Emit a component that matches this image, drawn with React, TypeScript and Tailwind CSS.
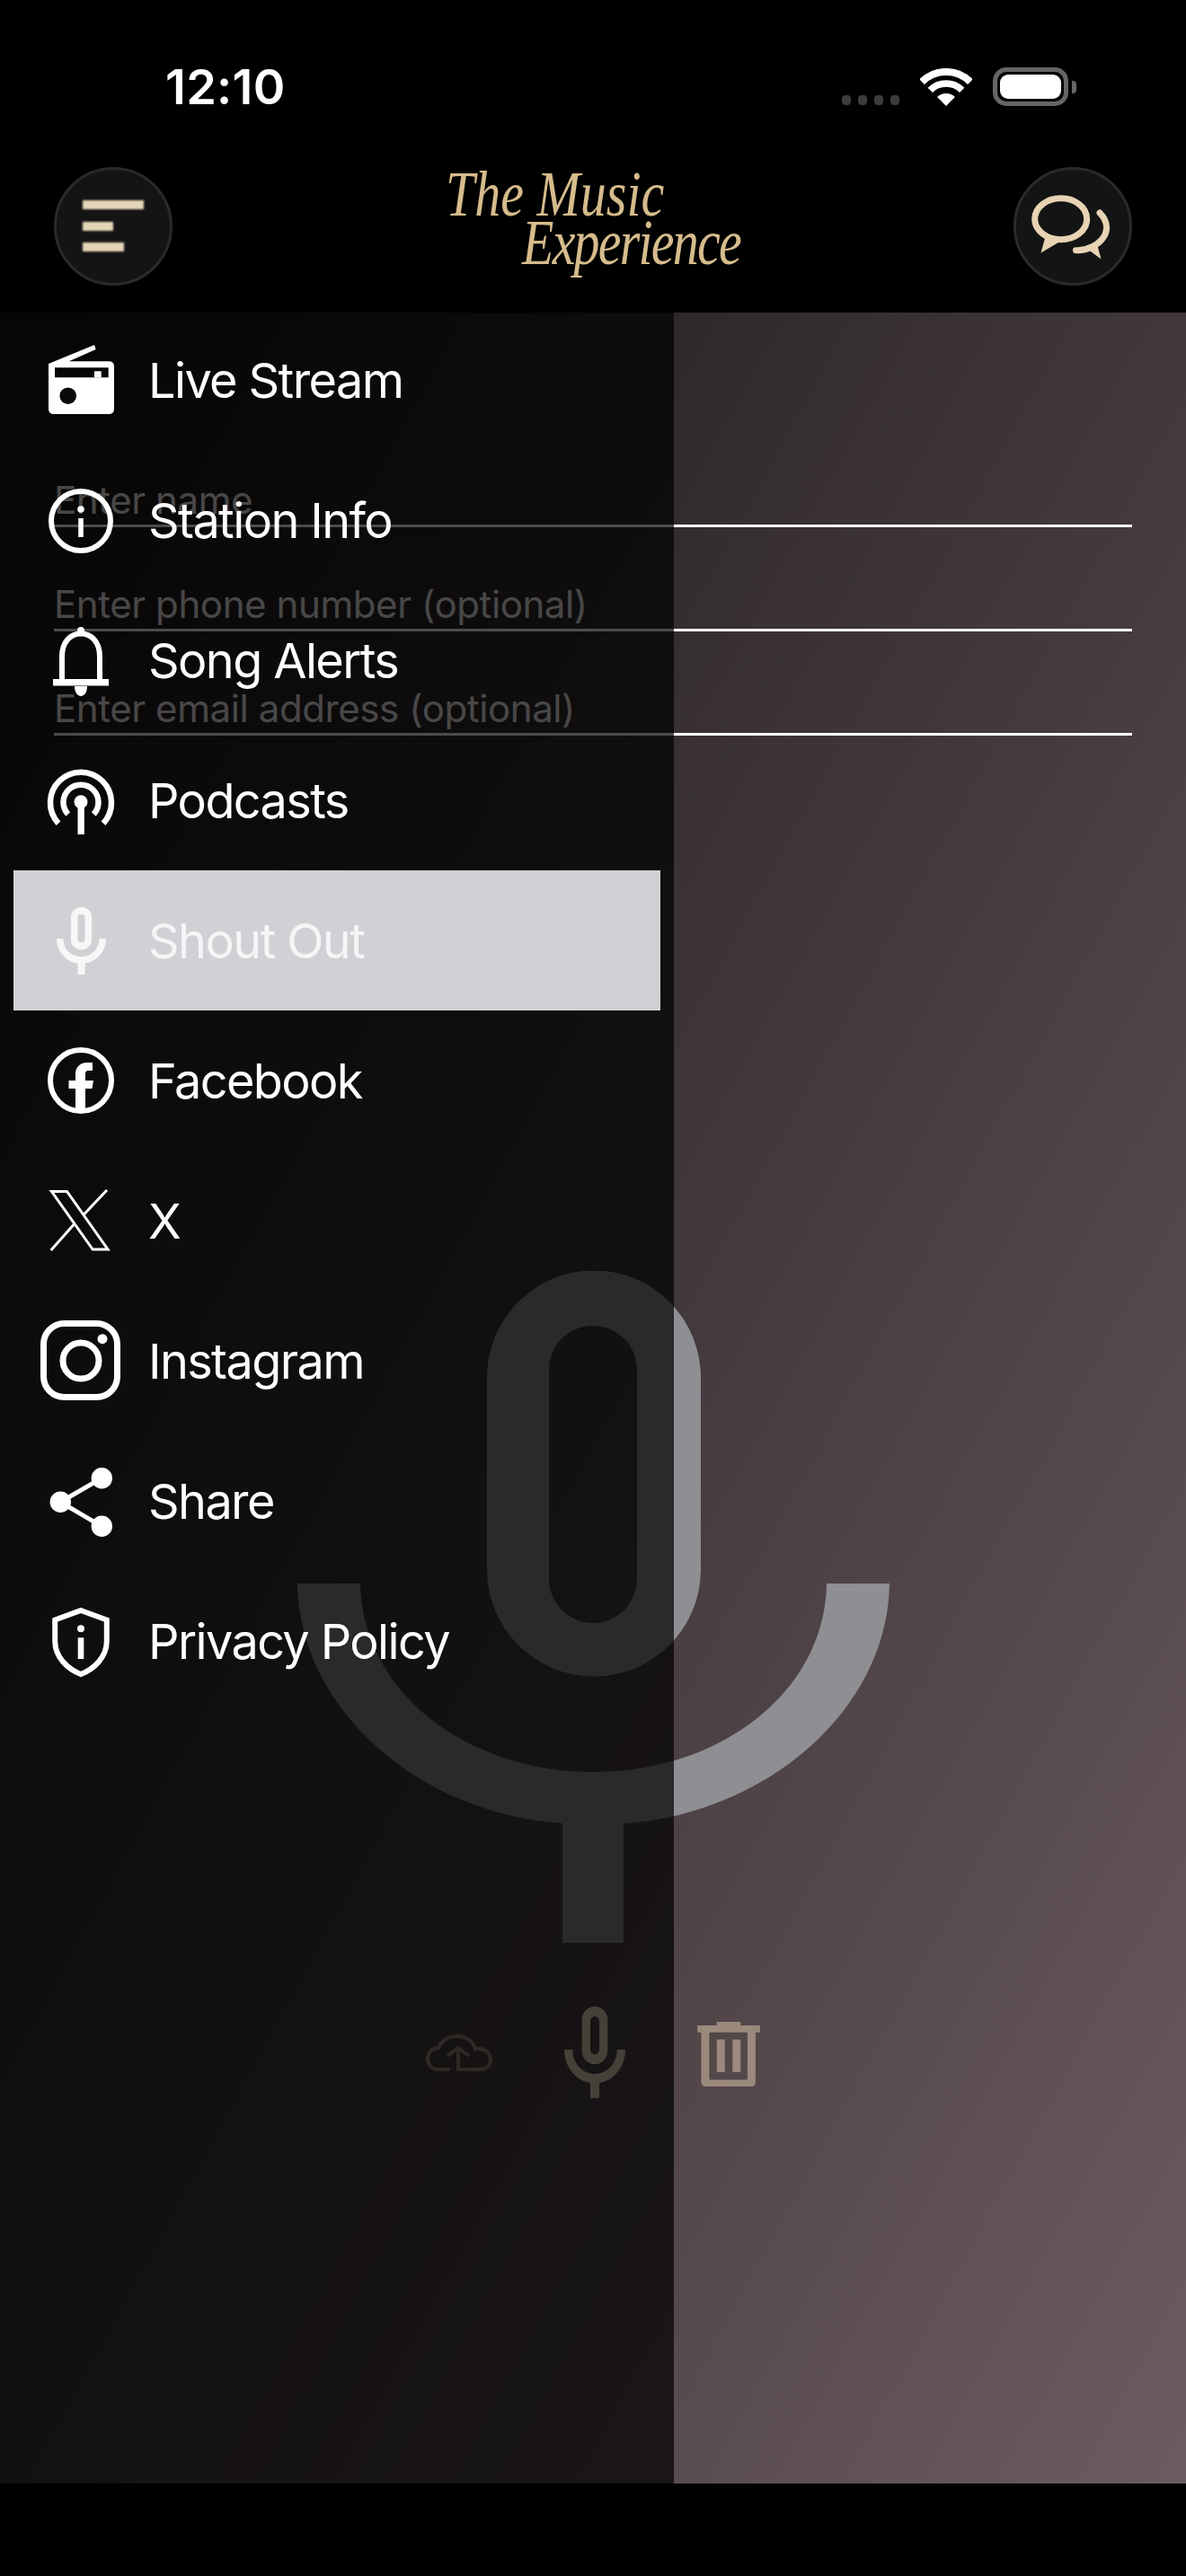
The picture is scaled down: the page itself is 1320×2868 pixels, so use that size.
import React from "react";

const FONT = "font-['Inter','Liberation_Sans',sans-serif]";

function Svg({ children }: { children: React.ReactNode }) {
  return (
    <svg viewBox="0 0 100 100" className="w-[100px] h-[100px] shrink-0" fill="none">
      {children}
    </svg>
  );
}

const icons: Record<string, React.ReactNode> = {
  radio: (
    <Svg>
      <path
        fillRule="evenodd"
        fill="#fff"
        d="M14 32 L65 11 L66.7 16 L36.7 29.3 H81 Q87 29.3 87 35 V82 Q87 88 81 88 H20 Q14 88 14 82 Z M21 36.3 V47.3 H80.7 V36.3 Z"
      />
      <rect x="65" y="40.3" width="7.7" height="7" fill="#fff" />
      <circle cx="35.7" cy="67.7" r="9.3" fill="#0a0a0a" />
    </Svg>
  ),
  info: (
    <Svg>
      <circle cx="50" cy="51" r="33" stroke="#fff" strokeWidth="6" />
      <circle cx="50" cy="38" r="3.8" fill="#fff" />
      <rect x="47.2" y="48" width="5.6" height="21" fill="#fff" />
    </Svg>
  ),
  bell: (
    <Svg>
      <rect x="46" y="13" width="8" height="10" rx="4" fill="#fff" />
      <path d="M29 72 V46 C29 30 38 20.5 50 20.5 C62 20.5 71 30 71 46 V72" stroke="#fff" strokeWidth="6" />
      <rect x="19" y="71" width="62" height="7.5" fill="#fff" />
      <path d="M43 79 H57 C57 88 52 90 50 90 C48 90 43 88 43 79 Z" fill="#fff" />
    </Svg>
  ),
  podcast: (
    <Svg>
      <path d="M25 75.7 A34 34 0 1 1 75 75.7" stroke="#fff" strokeWidth="6.5" />
      <path d="M35.7 65.5 A19.5 19.5 0 1 1 64.3 65.5" stroke="#fff" strokeWidth="6.5" />
      <circle cx="50" cy="51.7" r="7.5" fill="#fff" />
      <rect x="46.5" y="52" width="7.3" height="36" fill="#fff" />
    </Svg>
  ),
  facebook: (
    <Svg>
      <circle cx="50" cy="50" r="34" stroke="#fff" strokeWidth="6" />
      <path
        fill="#fff"
        d="M44 85 V59 H36.5 V50 H44 V43 C44 34 50 30 57 30 H63 V39 H58 C56 39 55 40 55 43 V50 H64 L62.5 59 H55 V85 Z"
      />
    </Svg>
  ),
  x: (
    <Svg>
      <path d="M17.5 17.5 H34.5 L80 82 H63.2 Z" stroke="#fff" strokeWidth="3" />
      <path d="M79 16 L53 43.5 M16.7 83 L43.3 53" stroke="#fff" strokeWidth="3" />
    </Svg>
  ),
  instagram: (
    <Svg>
      <rect x="8.5" y="8.5" width="82" height="82" rx="23" stroke="#fff" strokeWidth="7" />
      <circle cx="50" cy="50" r="20" stroke="#fff" strokeWidth="7" />
      <circle cx="74" cy="25.7" r="5.5" fill="#fff" />
    </Svg>
  ),
  share: (
    <Svg>
      <path d="M73.3 24.7 L27.3 51.3 L73.3 78.3" stroke="#fff" strokeWidth="5" />
      <circle cx="73.3" cy="24.7" r="11.7" fill="#fff" />
      <circle cx="27.3" cy="51.3" r="11.7" fill="#fff" />
      <circle cx="73.3" cy="78.3" r="11.7" fill="#fff" />
    </Svg>
  ),
  shield: (
    <Svg>
      <path
        d="M50 16 L78.8 26.5 V50 C78.8 68 65 81 50 87 C35 81 21.2 68 21.2 50 V26.5 Z"
        stroke="#fff"
        strokeWidth="6"
      />
      <circle cx="50" cy="36.3" r="4" fill="#fff" />
      <rect x="46.7" y="46.3" width="6.6" height="23.7" fill="#fff" />
    </Svg>
  ),
};

function SmallMic({ color, className }: { color: string; className: string }) {
  return (
    <svg viewBox="0 0 68 102" className={className} preserveAspectRatio="none">
      <path
        fill={color}
        fillRule="evenodd"
        d="M19.7 14.3 A14.3 14.3 0 0 1 48.3 14.3 V50 A14.3 14.3 0 0 1 19.7 50 Z M29 16 A5 5 0 0 1 39 16 V48.3 A5 5 0 0 1 29 48.3 Z"
      />
      <path
        fill={color}
        d="M0 48 H9.3 C9.3 63 20 75 34 75 C48 75 58.7 63 58.7 48 H68 C68 68 54 83 39 85 V102 H29 V85 C14 83 0 68 0 48 Z"
      />
    </svg>
  );
}

const rows: { label: string; icon: string; active?: boolean }[] = [
  { label: "Live Stream", icon: "radio" },
  { label: "Station Info", icon: "info" },
  { label: "Song Alerts", icon: "bell" },
  { label: "Podcasts", icon: "podcast" },
  { label: "Shout Out", icon: "mic", active: true },
  { label: "Facebook", icon: "facebook" },
  { label: "X", icon: "x" },
  { label: "Instagram", icon: "instagram" },
  { label: "Share", icon: "share" },
  { label: "Privacy Policy", icon: "shield" },
];

function Field({ text }: { text: string }) {
  return (
    <div className="h-[116px] border-b-[3px] border-white flex items-end pb-[2px]">
      <span className="text-[42px] leading-[50px] text-[#f2eeee] tracking-[-0.4px]">{text}</span>
    </div>
  );
}

export default function App() {
  return (
    <div className={`w-[1320px] h-[2868px] bg-black flex flex-col overflow-hidden ${FONT}`}>
      <div className="h-[186px] relative shrink-0">
        <div className="flex items-start justify-between pt-[64px] pl-[184px] pr-[122px]">
          <span className="text-[54px] leading-[65px] font-semibold text-white tracking-[0.3px]">12:10</span>
          <div className="flex items-end gap-[23px] pt-[11px]">
            <div className="flex gap-[8px] pb-[1px]">
              <div className="w-[10px] h-[11px] rounded-[4px] bg-[#3c3c3c]" />
              <div className="w-[10px] h-[11px] rounded-[4px] bg-[#3c3c3c]" />
              <div className="w-[10px] h-[11px] rounded-[4px] bg-[#3c3c3c]" />
              <div className="w-[10px] h-[11px] rounded-[4px] bg-[#3c3c3c]" />
            </div>
            <svg viewBox="0 0 58 42" className="w-[58px] h-[42px]" fill="none">
              <path d="M2.1 15.1 A38 38 0 0 1 55.9 15.1" stroke="#fff" strokeWidth="8" />
              <path d="M11.3 24.3 A25 25 0 0 1 46.7 24.3" stroke="#fff" strokeWidth="7.5" />
              <path d="M29 42 L19.1 32.1 A14 14 0 0 1 38.9 32.1 Z" fill="#fff" />
            </svg>
            <div className="flex items-center gap-[4px]">
              <div className="w-[84px] h-[43px] rounded-[15px] border-[5px] border-[#666] p-[3px] bg-black">
                <div className="w-full h-full rounded-[9px] bg-white" />
              </div>
              <div className="w-[5px] h-[14px] rounded-r-[4px] bg-[#666]" />
            </div>
          </div>
        </div>
      </div>

      <div className="h-[162px] shrink-0 flex justify-between px-[60px]">
        <div className="w-[132px] h-[132px] rounded-full bg-[#141414] border-[3px] border-[#2a2a2a] flex flex-col gap-[13.5px] pt-[34px] pl-[29px]">
          <div className="w-[68px] h-[10px] bg-[#e6d6b9] blur-[1px]" />
          <div className="w-[34px] h-[10px] bg-[#e6d6b9] blur-[1px]" />
          <div className="w-[46px] h-[10px] bg-[#e6d6b9] blur-[1px]" />
        </div>
        <div className="w-[328px] pt-[5px]">
          <div className="flex flex-col origin-top scale-y-125 font-['Liberation_Serif',serif] italic text-[#d6bc8c] text-[58px] leading-[40px] whitespace-nowrap">
            <span>The Music</span>
            <span className="ml-[85px] mt-[3px] tracking-[-1.8px]">Experience</span>
          </div>
        </div>
        <div className="w-[132px] h-[132px] rounded-full bg-[#141414] border-[3px] border-[#2a2a2a] flex items-center justify-center">
          <svg viewBox="0 0 110 100" className="w-[110px] h-[100px] shrink-0" fill="none">
            <ellipse cx="41.7" cy="41.7" rx="29" ry="23" stroke="#e8d4b4" strokeWidth="7" />
            <path d="M25 60 L19.5 79.5 L39 68 Z" fill="#e8d4b4" />
            <path d="M85 35 C91 41 93 47 92.5 53 C92 61 85 69 76 73 C70 76 64 77 58.5 76.7" stroke="#e8d4b4" strokeWidth="7" strokeLinecap="round" />
            <path d="M71 75 L86.5 86.5 L81 66 Z" fill="#e8d4b4" />
          </svg>
        </div>
      </div>

      <div className="relative h-[2417px] shrink-0 bg-[linear-gradient(to_bottom_right,#171415,#6c5c60)]">
        <div className="px-[60px] pt-[123px]">
          <Field text="Enter name" />
          <Field text="Enter phone number (optional)" />
          <Field text="Enter email address (optional)" />
        </div>

        <div className="flex justify-center mt-[596px]">
          <svg viewBox="0 0 659 748" className="w-[659px] h-[748px]">
            <path
              fill="#8e8e93"
              fillRule="evenodd"
              d="M211 119 A118.5 119 0 0 1 449 119 V332 A118.5 119 0 0 1 211 332 Z M280 110 A49 49 0 0 1 378 110 V343 A49 49 0 0 1 280 343 Z"
            />
            <path
              fill="#8e8e93"
              d="M0 348 H70 C72 470 190 558 329.5 558 C469 558 587 470 589 348 H659 C657 490 520 605 363 615 V748 H295 V615 C139 605 2 490 0 348 Z"
            />
          </svg>
        </div>

        <div className="flex items-center justify-center mt-[71px] h-[102px]">
          <svg viewBox="0 0 74 41" className="w-[74px] h-[41px]" fill="none">
            <path
              d="M27 39 H14 C6 39 2 33 2 27 C2 20 8 15 14 15 C17 7 25 2 35 2 C45 2 53 8 55 16 C62 15 72 18 72 28 C72 36 66 39 60 39 H36 V18"
              stroke="#99897a"
              strokeWidth="4"
            />
            <path d="M24 24 L36 15 L48 24" stroke="#99897a" strokeWidth="4" />
          </svg>
          <SmallMic color="#e8d8bc" className="w-[68px] h-[102px] mx-[80px]" />
          <svg viewBox="0 0 70 72.3" className="w-[70px] h-[72px] mt-[4px]">
            <path
              fill="#9b8a7c"
              fillRule="evenodd"
              d="M21.7 0 H48.3 V4 H70 V11.7 H65 V67 Q65 72.3 60 72.3 H10 Q4.3 72.3 4.3 67 V11.7 H0 V4 H21.7 Z M13.3 11.7 V64.7 H56 V11.7 Z"
            />
            <rect x="21.7" y="19.7" width="9" height="36.6" fill="#9b8a7c" />
            <rect x="39.3" y="19.7" width="9" height="36.6" fill="#9b8a7c" />
          </svg>
        </div>

        <div className="absolute left-0 top-0 bottom-0 w-[750px] bg-black/70">
          <div className="-mt-[3px]">
            {rows.map((r) => (
              <div
                key={r.label}
                className={`h-[156px] mx-[15px] pl-[25px] flex items-center gap-[25px] ${r.active ? "bg-[#d1d0d5]" : ""}`}
              >
                {r.icon === "mic" ? (
                  <div className="w-[100px] h-[100px] flex items-center justify-center shrink-0">
                    <SmallMic color="#f7f7f8" className="w-[55px] h-[75px]" />
                  </div>
                ) : (
                  icons[r.icon]
                )}
                <span className={`text-[54px] leading-[65px] tracking-[-1.6px] ${r.active ? "text-[#f5f5f6]" : "text-white"}`}>
                  {r.label}
                </span>
              </div>
            ))}
          </div>
        </div>
      </div>

      <div className="flex-1 bg-black" />
    </div>
  );
}
